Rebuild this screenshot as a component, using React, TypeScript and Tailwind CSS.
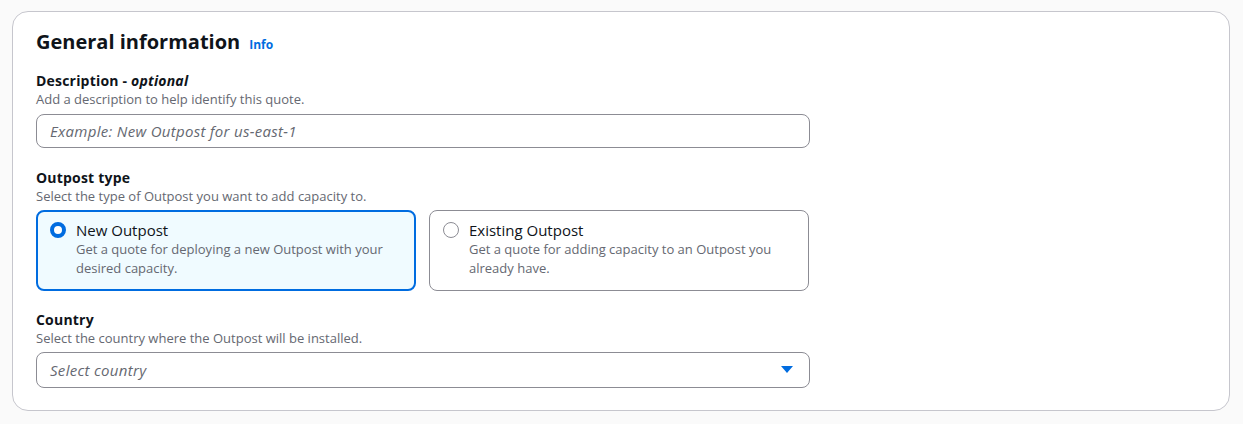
import { useState } from "react";

type TileProps = {
  title: string;
  description: string;
  selected: boolean;
  onSelect: () => void;
};

function Tile(props: TileProps) {
  return (
    <button
      type="button"
      onClick={props.onSelect}
      className={
        props.selected
          ? "w-[380px] flex gap-[10px] text-left rounded-lg border-2 border-[#006ce0] bg-[#f0fbff] px-[12px] pt-[8px] pb-[11px]"
          : "w-[380px] flex gap-[10px] text-left rounded-lg border border-[#8c8c94] bg-white px-[13px] pt-[9px] pb-[12px]"
      }
    >
      <span className="mt-[2px] shrink-0">
        {props.selected ? (
          <span className="block size-4 rounded-full border-[4px] border-[#006ce0] bg-white" />
        ) : (
          <span className="block size-4 rounded-full border border-[#8c8c94] bg-white" />
        )}
      </span>
      <span className="flex flex-col">
        <span className="text-[15px] leading-[20px] text-[#0f141a]">{props.title}</span>
        <span className="text-[13px] leading-[19px] text-[#656871]">{props.description}</span>
      </span>
    </button>
  );
}

function FieldLabel(props: { label: React.ReactNode; help: string }) {
  return (
    <div className="flex flex-col">
      <div className="text-[14px] leading-[18px] font-bold tracking-[0.2px] text-[#0f141a]">{props.label}</div>
      <div className="text-[13px] leading-[18px] text-[#656871]">{props.help}</div>
    </div>
  );
}

export default function App() {
  const [type, setType] = useState<"new" | "existing">("new");
  return (
    <div
      className="min-h-[424px] bg-[#fafafa] pl-[12px] pr-[13px] pt-[11px]"
      style={{ fontFamily: '"Open Sans", "Noto Sans", sans-serif' }}
    >
      <div className="rounded-2xl border border-[#c6c6cd] bg-white px-[23px] pt-[18px] pb-[22px]">
        <div className="flex items-baseline gap-[9px]">
          <h2 className="text-[20px] leading-[24px] font-bold text-[#0f141a]">General information</h2>
          <a className="text-[12px] font-bold text-[#006ce0]">Info</a>
        </div>
        <div className="w-[774px]">
          <div className="mt-[18px]">
            <FieldLabel
              label={
                <>
                  Description - <i>optional</i>
                </>
              }
              help="Add a description to help identify this quote."
            />
            <input
              className="mt-[6px] block w-full h-[34px] rounded-lg border border-[#8c8c94] px-[13px] text-[15px] tracking-[0.3px] text-[#0f141a] placeholder:italic placeholder:text-[#656871] outline-none"
              placeholder="Example: New Outpost for us-east-1"
            />
          </div>
          <div className="mt-[21px]">
            <FieldLabel label="Outpost type" help="Select the type of Outpost you want to add capacity to." />
            <div className="mt-[5px] flex gap-[13px]">
              <Tile
                title="New Outpost"
                description="Get a quote for deploying a new Outpost with your desired capacity."
                selected={type === "new"}
                onSelect={() => setType("new")}
              />
              <Tile
                title="Existing Outpost"
                description="Get a quote for adding capacity to an Outpost you already have."
                selected={type === "existing"}
                onSelect={() => setType("existing")}
              />
            </div>
          </div>
          <div className="mt-[20px]">
            <FieldLabel label="Country" help="Select the country where the Outpost will be installed." />
            <div className="mt-[5px] flex items-center justify-between h-[36px] rounded-lg border border-[#8c8c94] pl-[13px] pr-[16px]">
              <span className="text-[15px] tracking-[0.3px] italic text-[#656871]">Select country</span>
              <svg width="12" height="8" viewBox="0 0 12 8">
                <path d="M0 0h12L6 7z" fill="#006ce0" />
              </svg>
            </div>
          </div>
        </div>
      </div>
    </div>
  );
}
